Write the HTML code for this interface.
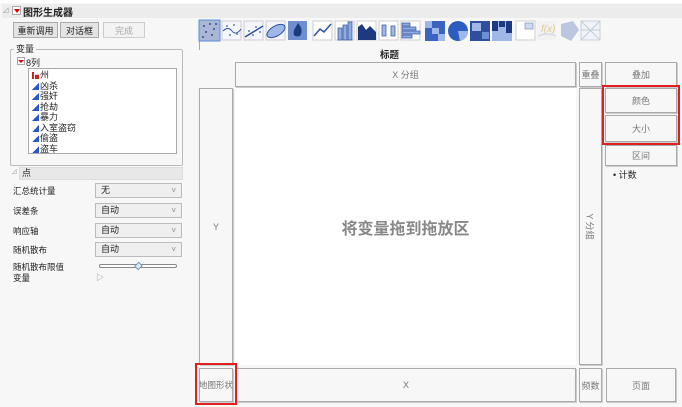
<!DOCTYPE html>
<html><head><meta charset="utf-8"><style>
*{box-sizing:border-box;margin:0;padding:0}
body{width:682px;height:407px;background:#f7f7f7;font-family:"Liberation Sans","Noto Sans CJK SC",sans-serif;font-size:9px;color:#222;position:relative;overflow:hidden}
.a{position:absolute}
.z{position:absolute;background:#f7f7f7;border:1px solid #aaa;box-shadow:1px 1px 0 #ccc;color:#777;display:flex;align-items:center;justify-content:center;font-size:9px}
.btn{position:absolute;border:1px solid #aaa;background:#e4e4e4;font-size:9px;display:flex;align-items:center;justify-content:center;height:16px;top:22px}
.dd{position:absolute;left:95px;width:87px;height:15px;border:1px solid #bbb;background:#efefef;font-size:9px;padding-left:5px;line-height:13px}
.dd:after{content:"˅";position:absolute;right:5px;top:0;color:#888;font-size:8px}
.lab{position:absolute;left:13px;font-size:8.5px}
.red{position:absolute;border:2px solid #e02020}
.li{height:10.5px;line-height:10.5px;white-space:nowrap}
.li i{display:inline-block;width:7px;height:7px;margin-right:1px;vertical-align:-1px}
.n{background:linear-gradient(to top left,#2a58c8 50%,transparent 50%)}
</style></head><body>
<div class="a" style="left:0;top:0;width:682px;height:3px;background:#fff"></div>
<div class="a" style="left:2px;top:4px;width:680px;height:14px;background:#ececec"></div>
<div class="a" style="left:3px;top:6px;font-size:7px;color:#888">◿</div>
<div class="a" style="left:12px;top:6px;width:9px;height:9px;background:#fff;border:1px solid #aaa"><div style="margin:2px 1px;border-left:3px solid transparent;border-right:3px solid transparent;border-top:4px solid #d00"></div></div>
<div class="a" style="left:23px;top:4px;font-size:10px;font-weight:bold">图形生成器</div>
<div class="btn" style="left:13px;width:45px">重新调用</div>
<div class="btn" style="left:60px;width:39px">对话框</div>
<div class="btn" style="left:103px;width:42px;background:#f3f3f3;border-color:#ccc;color:#aaa">完成</div>
<div class="a" style="left:199px;top:20px;width:1px;height:30px;background:#9ab"></div>
<div class="a" style="left:10px;top:49px;width:173px;height:117px;border:1px solid #bbb;border-radius:2px"></div>
<div class="a" style="left:14px;top:42px;background:#f7f7f7;padding:0 2px;font-size:9px">变量</div>
<div class="a" style="left:17px;top:57px;width:8px;height:8px;background:#fff;border:1px solid #aaa"><div style="margin:2px 0;border-left:3px solid transparent;border-right:3px solid transparent;border-top:3px solid #d00"></div></div>
<div class="a" style="left:26px;top:56px;font-size:9px">8列</div>
<div class="a" style="left:28px;top:68px;width:149px;height:86px;background:#fff;border:1px solid #aaa;font-size:9px;padding:1px 0 0 3px">
<div class="li"><i style="background:linear-gradient(to right,#c22 0 2px,transparent 2px 3px,#c22 3px);clip-path:polygon(0 0,40% 0,40% 40%,100% 40%,100% 100%,0 100%)"></i>州</div>
<div class="li"><i class="n"></i>凶杀</div><div class="li"><i class="n"></i>强奸</div><div class="li"><i class="n"></i>抢劫</div><div class="li"><i class="n"></i>暴力</div><div class="li"><i class="n"></i>入室盗窃</div><div class="li"><i class="n"></i>偷盗</div><div class="li"><i class="n"></i>盗车</div></div>
<div class="a" style="left:19px;top:167px;width:164px;height:13px;background:#e8e8e8;border:1px solid #ddd;font-size:9px;padding-left:2px;line-height:11px">点</div>
<div class="a" style="left:12px;top:168px;font-size:6px;color:#888">◿</div>
<div class="lab" style="top:185px">汇总统计量</div><div class="dd" style="top:183px">无</div>
<div class="lab" style="top:205px">误差条</div><div class="dd" style="top:203px">自动</div>
<div class="lab" style="top:225px">响应轴</div><div class="dd" style="top:223px">自动</div>
<div class="lab" style="top:244px">随机散布</div><div class="dd" style="top:242px">自动</div>
<div class="lab" style="top:261px">随机散布限值</div>
<div class="a" style="left:99px;top:264px;width:78px;height:4px;border:1px solid #888;border-radius:2px;background:#fff"></div>
<div class="a" style="left:135px;top:262px;width:7px;height:8px;background:#dde8f8;border:1px solid #68a;transform:rotate(45deg) scale(.8)"></div>
<div class="lab" style="top:272px">变量</div>
<div class="a" style="left:96px;top:272px;font-size:8px;color:#888">▷</div>
<svg class="a" style="left:198px;top:18px" width="405" height="26" viewBox="0 0 405 26">
<rect x="1" y="2" width="21" height="21" fill="#a9b6d6" stroke="#5a8fd8"/>
<g fill="#2d4f9e"><circle cx="6" cy="8" r="1"/><circle cx="12" cy="6" r="1"/><circle cx="16" cy="11" r="1"/><circle cx="8" cy="14" r="1"/><circle cx="14" cy="17" r="1"/><circle cx="18" cy="6" r="1"/><circle cx="5" cy="19" r="1"/></g>
<g transform="translate(24,0)"><rect x="0" y="3" width="19" height="19" fill="#f4f6fb" stroke="#ccc"/><path d="M1 13 Q6 8 10 13 T19 11" stroke="#2d4f9e" fill="none"/><g fill="#5a7fc8"><circle cx="5" cy="8" r="1"/><circle cx="12" cy="7" r="1"/><circle cx="8" cy="17" r="1"/><circle cx="15" cy="16" r="1"/></g></g>
<g transform="translate(46,0)"><rect x="0" y="3" width="19" height="19" fill="#f4f6fb" stroke="#ccc"/><path d="M1 19 L19 8" stroke="#2d4f9e" stroke-width="1.5"/><g fill="#5a7fc8"><circle cx="5" cy="13" r="1"/><circle cx="12" cy="9" r="1"/><circle cx="9" cy="17" r="1"/><circle cx="16" cy="14" r="1"/></g></g>
<g transform="translate(68,0)"><rect x="0" y="3" width="19" height="19" fill="#f4f6fb" stroke="#ccc"/><ellipse cx="10" cy="13" rx="10" ry="5" transform="rotate(-30 10 13)" fill="#9fb8e8" stroke="#2d4f9e"/></g>
<g transform="translate(90,0)"><rect x="0" y="3" width="19" height="19" fill="#6d8fd0"/><path d="M10 5 Q16 12 12 18 Q4 20 6 12 Z" fill="#1d3a80"/></g>
<g transform="translate(115,0)"><rect x="0" y="3" width="19" height="19" fill="#fff" stroke="#ccc"/><path d="M1 18 L7 11 L11 14 L18 6" stroke="#2d4f9e" stroke-width="1.5" fill="none"/></g>
<g transform="translate(137,0)"><rect x="0" y="3" width="19" height="19" fill="#fff" stroke="#ccc"/><g fill="#8eacdf" stroke="#2d4f9e" stroke-width=".7"><rect x="3" y="10" width="4" height="12"/><rect x="8" y="7" width="4" height="15"/><rect x="13" y="4" width="4" height="18"/></g></g>
<g transform="translate(159,0)"><rect x="0" y="3" width="19" height="19" fill="#fff" stroke="#ccc"/><path d="M1 22 V9 L5 6 L9 12 L13 8 L19 14 V22 Z" fill="#1d3a80"/></g>
<g transform="translate(181,0)"><rect x="0" y="3" width="19" height="19" fill="#fff" stroke="#ccc"/><g fill="#9fb8e8" stroke="#2d4f9e" stroke-width=".7"><rect x="3" y="7" width="4" height="11"/><rect x="12" y="8" width="4" height="10"/></g></g>
<g transform="translate(203,0)"><rect x="0" y="3" width="19" height="19" fill="#fff" stroke="#ccc"/><g fill="#8eacdf" stroke="#2d4f9e" stroke-width=".7"><rect x="1" y="5" width="8" height="3"/><rect x="1" y="9" width="14" height="3"/><rect x="1" y="13" width="18" height="3"/><rect x="1" y="17" width="10" height="3"/></g></g>
<g transform="translate(227,0)"><rect x="0" y="3" width="20" height="20" fill="#3a64bd"/><rect x="0" y="3" width="7" height="7" fill="#9fb8e8"/><rect x="7" y="10" width="7" height="6" fill="#9fb8e8"/><rect x="13" y="16" width="7" height="7" fill="#9fb8e8"/></g>
<g transform="translate(250,0)"><circle cx="10" cy="13" r="10" fill="#2d5dc0"/><path d="M10 13 L20 13 A10 10 0 0 1 12 23 Z" fill="#9fb8e8"/></g>
<g transform="translate(272,0)"><rect x="0" y="3" width="20" height="20" fill="#2d4f9e"/><rect x="2" y="5" width="9" height="8" fill="#9fb8e8"/><rect x="12" y="14" width="7" height="7" fill="#6d8fd0"/></g>
<g transform="translate(294,0)"><rect x="0" y="3" width="20" height="20" fill="#9fb8e8"/><rect x="0" y="3" width="6" height="10" fill="#1d3a80"/><rect x="7" y="3" width="6" height="6" fill="#1d3a80"/><rect x="14" y="3" width="6" height="12" fill="#1d3a80"/></g>
<g transform="translate(318,0)"><rect x="0" y="3" width="19" height="19" fill="#fff" stroke="#ccc"/><rect x="9" y="5" width="8" height="6" fill="#cfdaf0" stroke="#68a" stroke-width=".6"/></g>
<g transform="translate(339,0)" opacity=".55"><rect x="0" y="3" width="19" height="19" fill="#eee"/><text x="4" y="14" font-size="10" fill="#c9a540" font-style="italic">f(x)</text><path d="M1 18 Q10 14 19 18" stroke="#a8b8d8" fill="none"/></g>
<g transform="translate(361,0)" opacity=".5"><path d="M2 6 L14 3 L20 12 L12 23 L2 18 Z" fill="#7f98c8"/></g>
<g transform="translate(383,0)" opacity=".5"><rect x="0" y="3" width="19" height="19" fill="#eef" stroke="#9ab"/><path d="M0 3 L19 22 M19 3 L0 22 M0 12 L19 12" stroke="#8aa"/></g>
</svg>
<div class="a" style="left:380px;top:47px;font-size:9.5px;font-weight:bold">标题</div>
<div class="z" style="left:235px;top:62px;width:341px;height:25px">X 分组</div>
<div class="z" style="left:579px;top:62px;width:23px;height:25px">重叠</div>
<div class="z" style="left:605px;top:62px;width:72px;height:25px">叠加</div>
<div class="z" style="left:199px;top:88px;width:34px;height:277px">Y</div>
<div class="a" style="left:235px;top:88px;width:341px;height:277px;background:#fff;display:flex;align-items:center;justify-content:center;font-size:16px;font-weight:bold;color:#888">将变量拖到拖放区</div>
<div class="z" style="left:579px;top:88px;width:23px;height:277px"><span style="transform:rotate(90deg);white-space:nowrap">Y 分组</span></div>
<div class="z" style="left:605px;top:88px;width:72px;height:25px">颜色</div>
<div class="z" style="left:605px;top:115px;width:72px;height:27px">大小</div>
<div class="z" style="left:605px;top:145px;width:72px;height:21px">区间</div>
<div class="a" style="left:613px;top:168px;font-size:9px">• 计数</div>
<div class="z" style="left:199px;top:368px;width:34px;height:34px;font-size:8.5px;white-space:nowrap">地图形状</div>
<div class="z" style="left:236px;top:368px;width:340px;height:34px">X</div>
<div class="z" style="left:579px;top:368px;width:23px;height:34px">频数</div>
<div class="z" style="left:606px;top:368px;width:70px;height:34px">页面</div>
<div class="red" style="left:602px;top:85px;width:78px;height:60px"></div>
<div class="red" style="left:195px;top:363px;width:42px;height:42px"></div>
</body></html>
